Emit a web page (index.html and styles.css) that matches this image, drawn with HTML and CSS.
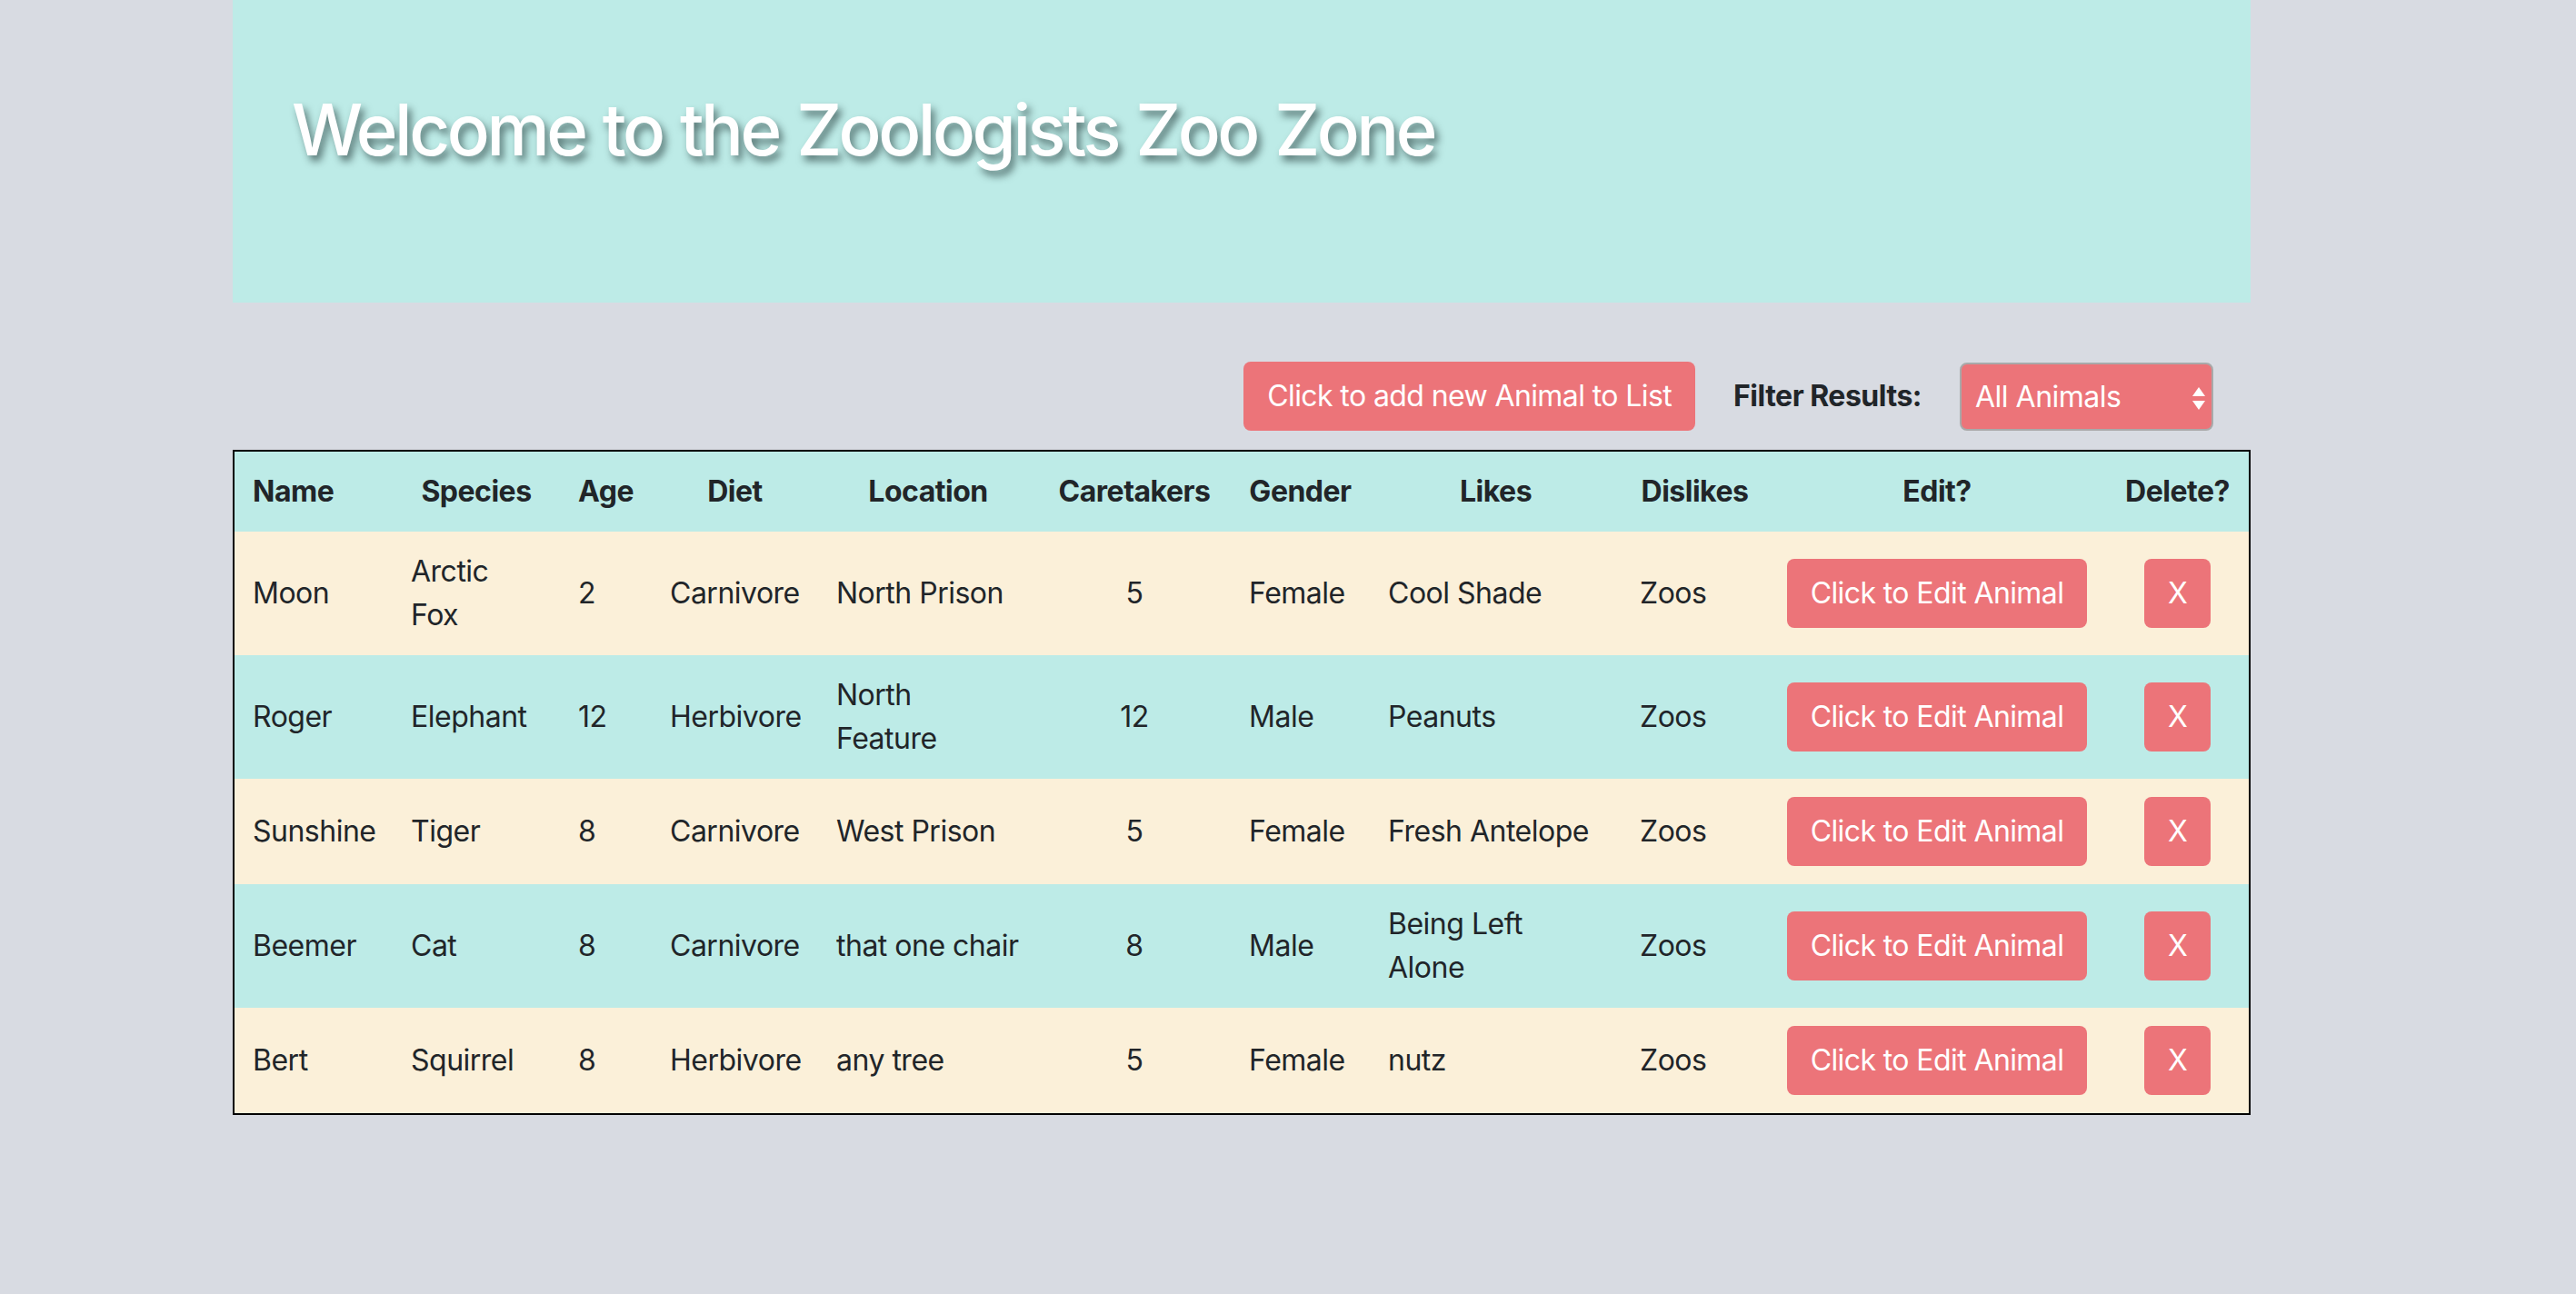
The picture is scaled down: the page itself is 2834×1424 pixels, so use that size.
FILE: index.html
```html
<!DOCTYPE html>
<html lang="en">
<head>
<meta charset="utf-8">
<title>Zoologists Zoo Zone</title>
<link rel="stylesheet" href="styles.css">
</head>
<body>
<div class="page">
  <header class="jumbo">
    <h1 class="title">Welcome to the Zoologists Zoo Zone</h1>
  </header>

  <div class="toolbar">
    <button class="btn btn-add" type="button">Click to add new Animal to List</button>
    <label class="filter-label" for="filter">Filter Results:</label>
    <div class="select-wrap">
      <select id="filter" class="filter-select">
        <option>All Animals</option>
      </select>
      <svg class="select-arrows" width="14" height="25" viewBox="0 0 14 25" aria-hidden="true">
        <polygon points="0,10 7,0 14,10" fill="#fff"/>
        <polygon points="0,15 14,15 7,25" fill="#fff"/>
      </svg>
    </div>
  </div>

  <table class="animals">
    <thead>
      <tr>
        <th class="c-name">Name</th>
        <th class="c-species">Species</th>
        <th class="c-age">Age</th>
        <th class="c-diet">Diet</th>
        <th class="c-loc">Location</th>
        <th class="c-care">Caretakers</th>
        <th class="c-gender">Gender</th>
        <th class="c-likes">Likes</th>
        <th class="c-dislikes">Dislikes</th>
        <th class="c-edit">Edit?</th>
        <th class="c-del">Delete?</th>
      </tr>
    </thead>
    <tbody>
      <tr>
        <td>Moon</td><td>Arctic Fox</td><td>2</td><td>Carnivore</td><td>North Prison</td><td class="num">5</td><td>Female</td><td>Cool Shade</td><td>Zoos</td>
        <td class="act"><button class="btn" type="button">Click to Edit Animal</button></td>
        <td class="act"><button class="btn" type="button">X</button></td>
      </tr>
      <tr>
        <td>Roger</td><td>Elephant</td><td>12</td><td>Herbivore</td><td>North<br>Feature</td><td class="num">12</td><td>Male</td><td>Peanuts</td><td>Zoos</td>
        <td class="act"><button class="btn" type="button">Click to Edit Animal</button></td>
        <td class="act"><button class="btn" type="button">X</button></td>
      </tr>
      <tr>
        <td>Sunshine</td><td>Tiger</td><td>8</td><td>Carnivore</td><td>West Prison</td><td class="num">5</td><td>Female</td><td>Fresh Antelope</td><td>Zoos</td>
        <td class="act"><button class="btn" type="button">Click to Edit Animal</button></td>
        <td class="act"><button class="btn" type="button">X</button></td>
      </tr>
      <tr>
        <td>Beemer</td><td>Cat</td><td>8</td><td>Carnivore</td><td>that one chair</td><td class="num">8</td><td>Male</td><td>Being Left Alone</td><td>Zoos</td>
        <td class="act"><button class="btn" type="button">Click to Edit Animal</button></td>
        <td class="act"><button class="btn" type="button">X</button></td>
      </tr>
      <tr>
        <td>Bert</td><td>Squirrel</td><td>8</td><td>Herbivore</td><td>any tree</td><td class="num">5</td><td>Female</td><td>nutz</td><td>Zoos</td>
        <td class="act"><button class="btn" type="button">Click to Edit Animal</button></td>
        <td class="act"><button class="btn" type="button">X</button></td>
      </tr>
    </tbody>
  </table>
</div>
</body>
</html>
```
FILE: styles.css
```css
* { box-sizing: border-box; }

body {
  margin: 0;
  background: #d8dbe2;
  color: #212529;
  font-family: Inter, "Noto Sans", sans-serif;
  font-size: 32px;
  line-height: 48px;
  letter-spacing: -0.5px;
}

.page {
  width: 2220px;
  margin-left: 256px;
}

.jumbo {
  background: #bdebe7;
  height: 333px;
  padding: 95px 65px 0;
}

.title {
  margin: 0;
  color: #fff;
  font-size: 78px;
  line-height: 96px;
  font-weight: 500;
  letter-spacing: -3.5px;
  word-spacing: 2px;
  text-shadow: 4px 6px 9px rgba(20, 40, 40, 0.6);
}

.toolbar {
  display: flex;
  justify-content: flex-end;
  align-items: center;
  gap: 42px;
  margin-top: 65px;
  margin-bottom: 21px;
  padding-right: 41px;
}

.btn {
  display: inline-block;
  vertical-align: middle;
  white-space: nowrap;
  font-family: inherit;
  font-size: 32px;
  line-height: 48px;
  letter-spacing: -0.6px;
  padding: 12px 24px;
  border: 2px solid transparent;
  border-radius: 8px;
  background: #ec7479;
  color: #fff;
  cursor: pointer;
}

.filter-label {
  font-weight: 700;
}

.select-wrap {
  position: relative;
  width: 279px;
  height: 75px;
}

.filter-select {
  appearance: none;
  -webkit-appearance: none;
  width: 100%;
  height: 100%;
  background: #ec7479;
  color: #fff;
  border: 2px solid #a9a9a9;
  border-radius: 8px;
  font-family: inherit;
  font-size: 32px;
  letter-spacing: -0.5px;
  padding: 0 40px 0 15px;
}

.select-arrows {
  position: absolute;
  right: 9px;
  top: 27px;
  pointer-events: none;
}

.animals {
  width: 2220px;
  table-layout: fixed;
  border: 2px solid #000;
  border-spacing: 0;
}

.animals th,
.animals td {
  padding: 20px;
  vertical-align: middle;
}

.animals th {
  font-weight: 700;
  text-align: center;
}

.animals th.c-name { text-align: left; }

.animals td { text-align: left; }
.animals td.num,
.animals td.act { text-align: center; }

.animals thead tr,
.animals tbody tr:nth-child(even) { background: #bdebe7; }
.animals tbody tr:nth-child(odd) { background: #fbf0d9; }

.c-name { width: 174px; }
.c-species { width: 184px; }
.c-age { width: 101px; }
.c-diet { width: 183px; }
.c-loc { width: 242px; }
.c-care { width: 212px; }
.c-gender { width: 153px; }
.c-likes { width: 277px; }
.c-dislikes { width: 161px; }
.c-edit { width: 372px; }
.c-del { width: 157px; }
```
